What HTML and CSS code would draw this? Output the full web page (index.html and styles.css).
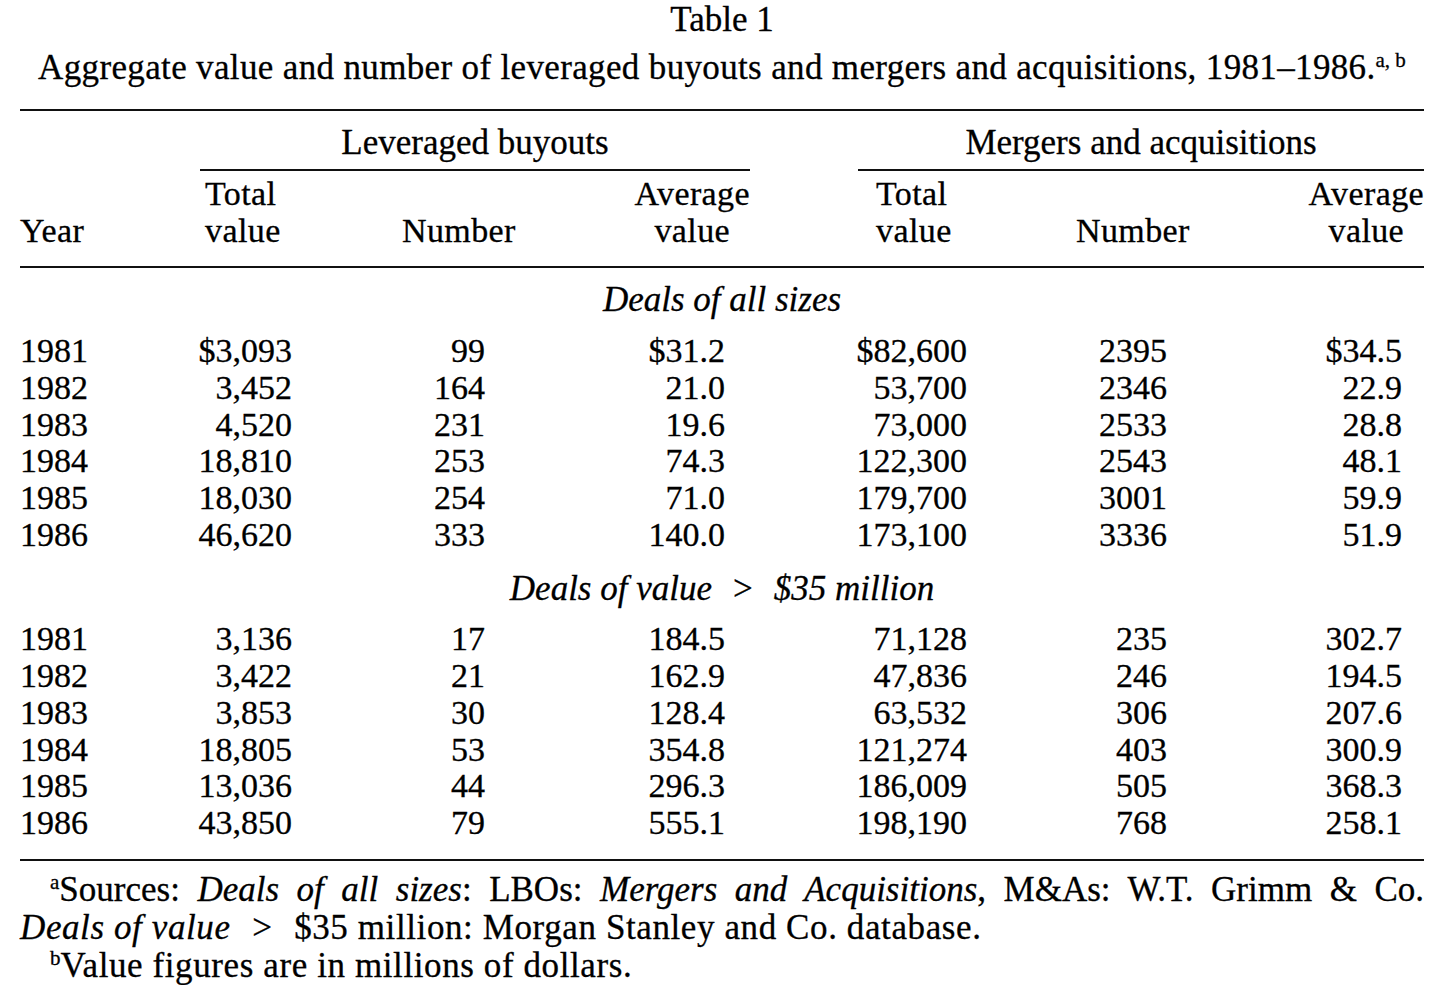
FILE: index.html
```html
<!DOCTYPE html>
<html lang="en">
<head>
  <meta charset="UTF-8">
  <title>Table 1 | Leveraged buyouts and mergers and acquisitions, 1981-1986</title>
  <link rel="stylesheet" href="styles.css">
</head>

<body>

  <div class="page">
    <div class="title">Table 1</div>
    <div class="caption">Aggregate value and number of leveraged buyouts and mergers and acquisitions, 1981–1986.<sup>a, b</sup></div>

    <!-- Main table -->
    <table class="deals">
      <colgroup>
        <col class="c-year">
        <col class="c-lbo-total">
        <col class="c-lbo-num">
        <col class="c-lbo-avg">
        <col class="c-ma-total">
        <col class="c-ma-num">
        <col class="c-ma-avg">
      </colgroup>
      <thead>
        <tr class="span-row">
          <th></th>
          <th colspan="3"><div class="spanner lbo">Leveraged buyouts</div></th>
          <th colspan="3"><div class="spanner ma">Mergers and acquisitions</div></th>
        </tr>
        <tr class="head-row">
          <th class="h-year">Year</th>
          <th class="h-total lbo">Total<br>value</th>
          <th class="h-num lbo">Number</th>
          <th class="h-avg lbo"><div>Average<br>value</div></th>
          <th class="h-total ma">Total<br>value</th>
          <th class="h-num ma">Number</th>
          <th class="h-avg ma"><div>Average<br>value</div></th>
        </tr>
      </thead>
      <tbody>
        <tr class="group group-first"><td colspan="7">Deals of all sizes</td></tr>
        <tr><td>1981</td><td>$3,093</td><td>99</td><td>$31.2</td><td>$82,600</td><td>2395</td><td>$34.5</td></tr>
        <tr><td>1982</td><td>3,452</td><td>164</td><td>21.0</td><td>53,700</td><td>2346</td><td>22.9</td></tr>
        <tr><td>1983</td><td>4,520</td><td>231</td><td>19.6</td><td>73,000</td><td>2533</td><td>28.8</td></tr>
        <tr><td>1984</td><td>18,810</td><td>253</td><td>74.3</td><td>122,300</td><td>2543</td><td>48.1</td></tr>
        <tr><td>1985</td><td>18,030</td><td>254</td><td>71.0</td><td>179,700</td><td>3001</td><td>59.9</td></tr>
        <tr><td>1986</td><td>46,620</td><td>333</td><td>140.0</td><td>173,100</td><td>3336</td><td>51.9</td></tr>

        <tr class="group"><td colspan="7">Deals of value <span class="gt">&gt;</span> $35 million</td></tr>
        <tr><td>1981</td><td>3,136</td><td>17</td><td>184.5</td><td>71,128</td><td>235</td><td>302.7</td></tr>
        <tr><td>1982</td><td>3,422</td><td>21</td><td>162.9</td><td>47,836</td><td>246</td><td>194.5</td></tr>
        <tr><td>1983</td><td>3,853</td><td>30</td><td>128.4</td><td>63,532</td><td>306</td><td>207.6</td></tr>
        <tr><td>1984</td><td>18,805</td><td>53</td><td>354.8</td><td>121,274</td><td>403</td><td>300.9</td></tr>
        <tr><td>1985</td><td>13,036</td><td>44</td><td>296.3</td><td>186,009</td><td>505</td><td>368.3</td></tr>
        <tr class="last"><td>1986</td><td>43,850</td><td>79</td><td>555.1</td><td>198,190</td><td>768</td><td>258.1</td></tr>
      </tbody>
    </table>

    <!-- Footnotes -->
    <div class="notes">
      <div class="note-first"><sup>a</sup>Sources: <i>Deals of all sizes</i>: LBOs: <i>Mergers and Acquisitions</i>, M&amp;As: W.T. Grimm &amp; Co.</div>
      <div><i>Deals of value</i> <span class="gt">&gt;</span> $35 million: Morgan Stanley and Co. database.</div>
      <div class="note-b"><sup>b</sup>Value figures are in millions of dollars.</div>
    </div>
  </div>

</body>
</html>
```

FILE: styles.css
```css
body {
  margin: 0;
  background: #fff;
  color: #000;
  font-family: "Liberation Serif", "Times New Roman", serif;
  -webkit-text-stroke: 0.3px #000;
}

.page {
  width: 1404px;
  margin-left: 20px;
  font-size: 35px;
}

.title {
  text-align: center;
  line-height: 39px;
}

.caption {
  text-align: center;
  line-height: 40px;
  letter-spacing: 0.35px;
  margin: 9px 0 21px;
}

sup {
  font-size: 21px;
  line-height: 0;
  vertical-align: 12px;
  letter-spacing: 0;
}

/* Table */
.deals {
  width: 1404px;
  table-layout: fixed;
  border-collapse: collapse;
  border-top: 2px solid #111;
}

.c-year { width: 160px; }
.c-lbo-total { width: 112px; }
.c-lbo-num { width: 193px; }
.c-lbo-avg { width: 240px; }
.c-ma-total { width: 242px; }
.c-ma-num { width: 200px; }
.c-ma-avg { width: 257px; }

.deals th {
  font-weight: normal;
  padding: 0;
}

.span-row th {
  padding-top: 12px;
  line-height: 40px;
  text-align: center;
  vertical-align: bottom;
}

.spanner {
  border-bottom: 2px solid #111;
  padding-bottom: 6px;
}

.spanner.lbo {
  margin: 0 -25px 0 20px;
}

.spanner.ma {
  margin-left: 133px;
}

.head-row th {
  font-size: 34px;
  line-height: 36.8px;
  padding: 5px 0 16px;
  vertical-align: bottom;
  white-space: nowrap;
  text-align: left;
  letter-spacing: 0.4px;
  border-bottom: 2px solid #111;
}

.h-total.lbo { padding-left: 25px; }
.h-total.ma { padding-left: 151px; }
.h-num.lbo { padding-left: 110px; }
.h-num.ma { padding-left: 109px; }

.head-row .h-avg {
  text-align: right;
}

.h-avg div {
  display: inline-block;
  text-align: center;
}

.h-avg.lbo div {
  margin-right: -25px;
}

.deals td {
  font-size: 34px;
  line-height: 36.8px;
  padding: 0;
  text-align: right;
  white-space: nowrap;
}

.deals td:first-child {
  text-align: left;
}

.deals td:last-child {
  padding-right: 22px;
}

.deals .group td {
  font-size: 35px;
  font-style: italic;
  line-height: 40px;
  text-align: center;
  padding: 14.7px 0 12.6px;
}

.deals .group-first td {
  padding: 12px 0 13.5px;
}

.gt {
  padding: 0 0.35em;
  font-style: normal;
}

.deals .last td {
  padding-bottom: 17px;
  border-bottom: 2px solid #111;
}

/* Footnotes */
.notes {
  margin-top: 10.5px;
  line-height: 38px;
  letter-spacing: 0.6px;
}

.note-first {
  text-indent: 30px;
  text-align: justify;
  text-align-last: justify;
  letter-spacing: 0;
}

.note-b {
  text-indent: 30px;
}
```
